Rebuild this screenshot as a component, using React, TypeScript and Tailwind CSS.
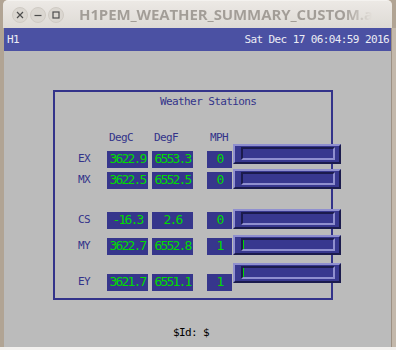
// MEDM-style weather summary screen inside an Ubuntu window frame

const mono = "font-['DejaVu_Sans_Mono',monospace] text-[11px] tracking-[-0.6px] leading-[12px]";
const digits = "font-['DejaVu_Sans_Mono',monospace] text-[13px] tracking-[-1.8px] leading-[14px] text-[#00dd00]";

interface Station {
  name: string;
  degC: string;
  degF: string;
  mph: string;
  fill: number;
  rowGap: string;
  barLift: string;
}

const stations: Station[] = [
  { name: "EX", degC: "3622.9", degF: "6553.3", mph: "0", fill: 0, rowGap: "mt-0", barLift: "mb-[4px]" },
  { name: "MX", degC: "3622.5", degF: "6552.5", mph: "0", fill: 0, rowGap: "mt-[1px]", barLift: "mb-0" },
  { name: "CS", degC: "-16.3", degF: "2.6", mph: "0", fill: 0, rowGap: "mt-[20px]", barLift: "mb-0" },
  { name: "MY", degC: "3622.7", degF: "6552.8", mph: "1", fill: 1, rowGap: "mt-[6px]", barLift: "mb-0" },
  { name: "EY", degC: "3621.7", degF: "6551.1", mph: "1", fill: 1, rowGap: "mt-[8px]", barLift: "mb-[8px]" },
];

function Bar({ fill, lift }: { fill: number; lift: string }) {
  return (
    <div
      className={`ml-[1px] w-[108px] h-[20px] shrink-0 border-2 border-t-[#8f8fcf] border-l-[#8f8fcf] border-b-[#1b1b4d] border-r-[#1b1b4d] bg-[#38388f] pl-[6px] pr-[4px] pt-[1px] pb-[2px] ${lift}`}
    >
      <div className="h-[13px] border-2 border-t-[#1b1b4d] border-l-[#1b1b4d] border-b-[#8f8fcf] border-r-[#8f8fcf] bg-[#38388f]">
        <div className="h-full bg-[#00dd00]" style={{ width: fill }} />
      </div>
    </div>
  );
}

function ValueBox({ value, width }: { value: string; width: string }) {
  return (
    <div className={`${width} h-[17px] shrink-0 bg-[#36368c] flex items-center justify-center pb-[2px] ${digits}`}>
      {value}
    </div>
  );
}

function StationRow({ s }: { s: Station }) {
  return (
    <div className={`flex items-end pl-[23px] ${s.rowGap}`}>
      <div className={`w-[29px] h-[17px] shrink-0 flex items-center pb-[2px] text-[#33338a] ${mono}`}>{s.name}</div>
      <ValueBox value={s.degC} width="w-[41px]" />
      <div className="w-[4px] shrink-0" />
      <ValueBox value={s.degF} width="w-[41px]" />
      <div className="w-[14px] shrink-0" />
      <ValueBox value={s.mph} width="w-[25px]" />
      <Bar fill={s.fill} lift={s.barLift} />
    </div>
  );
}

function TitleButton({ kind }: { kind: "close" | "min" | "max" }) {
  return (
    <div className="w-[16px] h-[16px] rounded-full bg-[#dbd7d1] border border-[#d0cbc4] flex items-center justify-center">
      <svg width="8" height="8" viewBox="0 0 8 8" fill="none" stroke="#4d4d4d" strokeWidth="1.2">
        {kind === "close" && <path d="M1 1L7 7M7 1L1 7" />}
        {kind === "min" && <path d="M0.5 4.5H7.5" />}
        {kind === "max" && <rect x="1" y="1" width="6" height="6" />}
      </svg>
    </div>
  );
}

export default function App() {
  return (
    <div className="w-[396px] h-[350px] bg-[#b1a494] flex flex-col overflow-hidden">
      <div className="h-[28px] shrink-0 pl-[3px] pr-[4px] flex">
        <div className="flex-1 rounded-t-[5px] bg-linear-to-b from-[#ece9e5] to-[#dedad5] border-t border-[#f4f2ef] flex items-center pl-[9px] gap-[2px]">
          <TitleButton kind="close" />
          <TitleButton kind="min" />
          <TitleButton kind="max" />
          <div className="ml-[13px] whitespace-nowrap font-['Open_Sans',sans-serif] font-bold text-[15px] tracking-[-0.1px] bg-linear-to-r from-[#a29d97] from-[90%] to-[#e6e2dd] bg-clip-text text-transparent">
            H1PEM_WEATHER_SUMMARY_CUSTOM.a
          </div>
        </div>
      </div>

      <div className="h-[319px] shrink-0 flex pl-[4px]">
        <div className="w-[387px] shrink-0 flex flex-col">
          <div className={`h-[23px] shrink-0 bg-[#4b51a3] flex items-center justify-between pl-[3px] pr-[2px] text-[#ececf4] ${mono}`}>
            <span>H1</span>
            <span>Sat Dec 17 06:04:59 2016</span>
          </div>

          <div className="flex-1 bg-[#bbbbbb] flex flex-col">
            <div className="ml-[49px] mt-[39px] w-[280px] h-[210px] shrink-0 border-2 border-[#33338a]">
              <div className={`pl-[105px] pt-[4px] text-[#33338a] ${mono}`}>Weather Stations</div>
              <div className={`mt-[24px] h-[12px] flex pl-[54px] text-[#33338a] ${mono}`}>
                <span className="w-[45px] shrink-0">DegC</span>
                <span className="w-[56px] shrink-0">DegF</span>
                <span>MPH</span>
              </div>
              {stations.map((s) => (
                <StationRow key={s.name} s={s} />
              ))}
            </div>
            <div className={`mt-[27px] pl-[169px] text-black ${mono}`}>$Id: $</div>
          </div>
        </div>
        <div className="flex-1 border-l border-[#9d9184] bg-[#c3b8ab]" />
      </div>

      <div className="flex-1 bg-[#f3f1ef]" />
    </div>
  );
}
